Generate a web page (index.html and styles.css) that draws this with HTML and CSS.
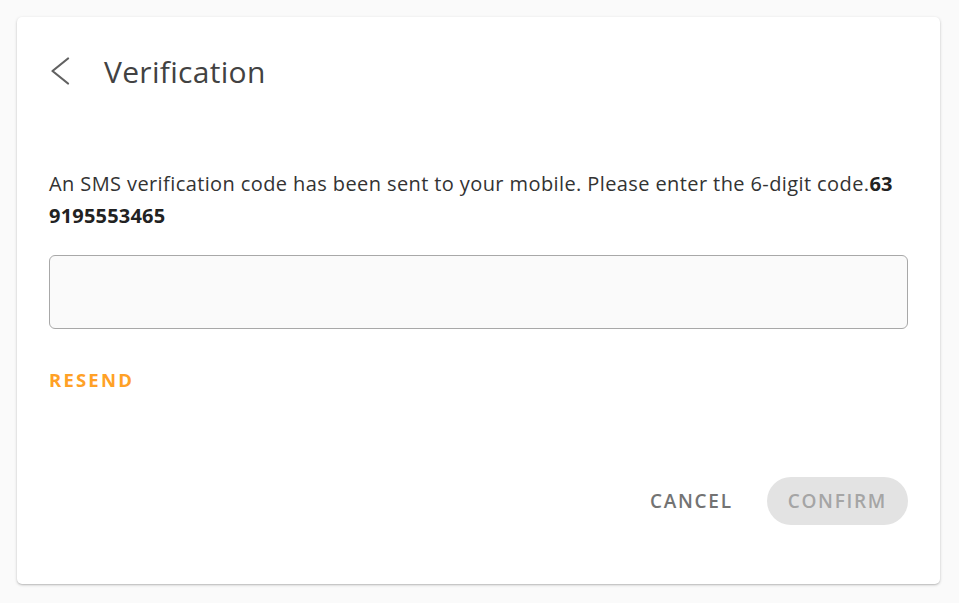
FILE: index.html
```html
<!DOCTYPE html>
<html>
<head>
<meta charset="utf-8">
<link rel="stylesheet" href="styles.css">
</head>
<body>
<div class="card">
  <div class="header">
    <span class="back">
      <svg width="20" height="28" viewBox="0 0 20 28"><polyline points="18,1.5 2.5,14 18,26.5" fill="none" stroke="#616161" stroke-width="2.2" stroke-linecap="round" stroke-linejoin="round"/></svg>
    </span>
    <h1 class="title">Verification</h1>
  </div>
  <p class="message">An SMS verification code has been sent to your mobile. Please enter the 6-digit code.<b>63</b> <b>9195553465</b></p>
  <div class="field"></div>
  <div class="resend">RESEND</div>
  <div class="actions">
    <span class="btn cancel">CANCEL</span>
    <span class="btn confirm">CONFIRM</span>
  </div>
</div>
</body>
</html>
```
FILE: styles.css
```css
html, body { margin: 0; padding: 0; }
body {
  background: #fafafa;
  font-family: "Open Sans", "Noto Sans", sans-serif;
  padding: 17px 19px 19px 17px;
}
.card {
  box-sizing: border-box;
  width: 923px;
  height: 567px;
  background: #fff;
  border-radius: 5px;
  box-shadow: 0 1px 3px rgba(0,0,0,0.22), 0 1px 1px rgba(0,0,0,0.08);
  padding: 24px 32px 0 32px;
  display: flex;
  flex-direction: column;
}
.header {
  height: 60px;
  display: flex;
  align-items: center;
}
.back { width: 20px; height: 28px; margin-left: 1px; display: flex; }
.title {
  margin: 0 0 0 34px;
  font-size: 30px;
  font-weight: 400;
  color: #424242;
  letter-spacing: 0.3px;
}
.message {
  margin: 67px 0 0 0;
  font-size: 20px;
  line-height: 32px;
  color: #333;
  letter-spacing: 0.4px;
}
.message b { color: #222; font-weight: 700; letter-spacing: 0.2px; }
.field {
  margin-top: 23px;
  height: 72px;
  border: 1px solid #a8a8a8;
  border-radius: 6px;
  background: #fafafa;
}
.resend {
  margin-top: 41px;
  line-height: 20px;
  font-size: 18.5px;
  font-weight: 700;
  color: #ffa126;
  letter-spacing: 2.2px;
}
.actions {
  margin-top: 87px;
  display: flex;
  justify-content: flex-end;
  align-items: center;
  gap: 18px;
}
.btn {
  height: 48px;
  display: flex;
  align-items: center;
  font-size: 19px;
  font-weight: 600;
  letter-spacing: 1.7px;
  border-radius: 24px;
}
.cancel { padding: 0 16px; color: #737373; }
.confirm { padding: 0 21px; background: #e3e3e3; color: #a5a5a5; }
```
